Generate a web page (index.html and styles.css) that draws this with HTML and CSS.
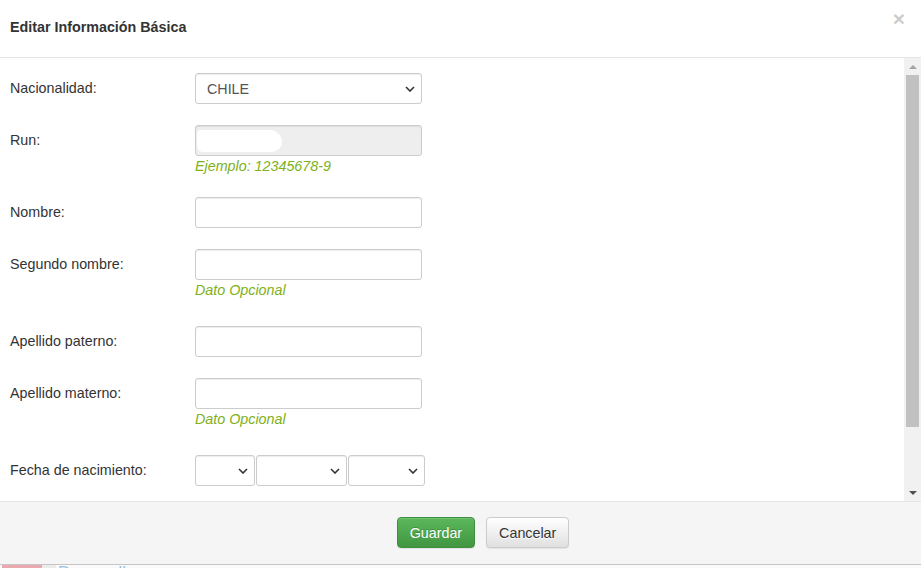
FILE: index.html
```html
<!DOCTYPE html>
<html lang="es">
<head>
    <meta charset="UTF-8">
    <meta name="viewport" content="width=device-width, initial-scale=1.0">
    <title>Editar Información Básica</title>
    <link rel="stylesheet" href="styles.css">
</head>
<body>
    <div class="modal">
        <div class="modal-header">
            <h4 class="modal-title">Editar Información Básica</h4>
            <button class="close" type="button">&times;</button>
        </div>

        <div class="modal-body">
            <div class="body-content">
                <div class="form-row">
                    <label for="nacionalidad">Nacionalidad:</label>
                    <div class="field">
                        <div class="select-wrap">
                            <select id="nacionalidad" class="form-control">
                                <option>CHILE</option>
                            </select>
                            <svg class="chevron" width="10" height="6" viewBox="0 0 10 6"><path d="M1 1l4 4 4-4" fill="none" stroke="#333" stroke-width="1.6"/></svg>
                        </div>
                    </div>
                </div>

                <div class="form-row">
                    <label for="run">Run:</label>
                    <div class="field">
                        <div class="input-wrap">
                            <input id="run" class="form-control" type="text" disabled>
                            <span class="blob"></span>
                        </div>
                        <span class="help-block help-tight">Ejemplo: 12345678-9</span>
                    </div>
                </div>

                <div class="form-row">
                    <label for="nombre">Nombre:</label>
                    <div class="field">
                        <input id="nombre" class="form-control" type="text">
                    </div>
                </div>

                <div class="form-row">
                    <label for="segundo">Segundo nombre:</label>
                    <div class="field">
                        <input id="segundo" class="form-control" type="text">
                        <span class="help-block">Dato Opcional</span>
                    </div>
                </div>

                <div class="form-row">
                    <label for="paterno">Apellido paterno:</label>
                    <div class="field">
                        <input id="paterno" class="form-control" type="text">
                    </div>
                </div>

                <div class="form-row">
                    <label for="materno">Apellido materno:</label>
                    <div class="field">
                        <input id="materno" class="form-control" type="text">
                        <span class="help-block">Dato Opcional</span>
                    </div>
                </div>

                <div class="form-row">
                    <label for="dia">Fecha de nacimiento:</label>
                    <div class="field date-fields">
                        <div class="select-wrap dia">
                            <select id="dia" class="form-control"><option></option></select>
                            <svg class="chevron" width="10" height="6" viewBox="0 0 10 6"><path d="M1 1l4 4 4-4" fill="none" stroke="#333" stroke-width="1.6"/></svg>
                        </div>
                        <div class="select-wrap mes">
                            <select class="form-control"><option></option></select>
                            <svg class="chevron" width="10" height="6" viewBox="0 0 10 6"><path d="M1 1l4 4 4-4" fill="none" stroke="#333" stroke-width="1.6"/></svg>
                        </div>
                        <div class="select-wrap anio">
                            <select class="form-control"><option></option></select>
                            <svg class="chevron" width="10" height="6" viewBox="0 0 10 6"><path d="M1 1l4 4 4-4" fill="none" stroke="#333" stroke-width="1.6"/></svg>
                        </div>
                    </div>
                </div>
            </div>

            <div class="scrollbar">
                <span class="sb-btn"><span class="arrow-up"></span></span>
                <span class="sb-track"><span class="sb-thumb"></span></span>
                <span class="sb-btn"><span class="arrow-down"></span></span>
            </div>
        </div>

        <div class="modal-footer">
            <button class="btn btn-success" type="button">Guardar</button>
            <button class="btn btn-default" type="button">Cancelar</button>
        </div>
    </div>

    <div class="page-strip">
        <span class="pink"></span>
        <span class="tab"></span>
        <span class="link">Desarrollo</span>
    </div>
</body>
</html>
```

FILE: styles.css
```css
html, body {
    margin: 0;
    height: 568px;
    overflow: hidden;
}
body {
    font-family: "Liberation Sans", Arial, sans-serif;
    font-size: 14.3px;
    color: #333;
    background-color: #fff;
}
.modal {
    background-color: #fff;
    border-bottom: 1px solid #c6c6c6;
}
.modal-header {
    display: flex;
    align-items: flex-start;
    height: 58px;
    padding: 17px 16px 0 10px;
    box-sizing: border-box;
    border-bottom: 1px solid #e5e5e5;
}
.modal-title {
    margin: 0;
    font-size: 14.3px;
    line-height: 20px;
    font-weight: bold;
    color: #333;
}
.close {
    margin: -9px 0 0 auto;
    padding: 0;
    border: 0;
    background: none;
    font-family: "Liberation Sans", Arial, sans-serif;
    font-size: 21px;
    font-weight: bold;
    line-height: 21px;
    color: #000;
    opacity: .2;
    cursor: pointer;
}

/* cuerpo con scroll */
.modal-body {
    display: flex;
    height: 443px;
}
.body-content {
    flex: 1;
    padding: 15px 0 0 10px;
    overflow: hidden;
}
.scrollbar {
    display: flex;
    flex-direction: column;
    width: 17px;
    background-color: #f1f1f1;
}
.sb-btn {
    display: flex;
    align-items: center;
    justify-content: center;
    height: 17px;
}
.arrow-up {
    border-left: 4px solid transparent;
    border-right: 4px solid transparent;
    border-bottom: 4px solid #a3a3a3;
}
.arrow-down {
    border-left: 4px solid transparent;
    border-right: 4px solid transparent;
    border-top: 4px solid #505050;
}
.sb-track {
    flex: 1;
}
.sb-thumb {
    display: block;
    height: 352px;
    margin: 0 2px;
    background-color: #c1c1c1;
}

.form-row {
    display: grid;
    grid-template-columns: 185px 227px;
    margin-bottom: 21px;
}
.form-row label {
    line-height: 31px;
    color: #333;
}
.form-control {
    display: block;
    width: 100%;
    height: 31px;
    box-sizing: border-box;
    margin: 0;
    padding: 0 11px;
    border: 1px solid #ccc;
    border-radius: 3px;
    background-color: #fff;
    box-shadow: inset 0 1px 1px rgba(0, 0, 0, .075);
    font-family: "Liberation Sans", Arial, sans-serif;
    font-size: 14.3px;
    color: #555;
}
.form-control:disabled {
    background-color: #eee;
}
select.form-control {
    appearance: none;
    -webkit-appearance: none;
}
.select-wrap,
.input-wrap {
    position: relative;
}
.chevron {
    position: absolute;
    right: 7px;
    top: 13px;
    pointer-events: none;
}
.blob {
    position: absolute;
    left: 2px;
    top: 5px;
    width: 85px;
    height: 22px;
    border-radius: 4px 12px 10px 6px;
    background-color: #fff;
}
.help-block {
    display: block;
    margin: 2px 0 6px;
    line-height: 17px;
    font-style: italic;
    color: #80b01a;
}
.help-tight {
    margin-bottom: 1px;
}
.date-fields {
    display: flex;
    gap: 1px;
}
.date-fields .select-wrap {
    flex-shrink: 0;
}
.dia { width: 60px; }
.mes { width: 91px; }
.anio { width: 77px; }

.modal-footer {
    display: flex;
    justify-content: center;
    gap: 11px;
    height: 63px;
    box-sizing: border-box;
    padding: 15px 0 0 45px;
    border-top: 1px solid #e5e5e5;
    background-color: #f5f5f5;
}
.btn {
    height: 31px;
    padding: 0 12px;
    border: 1px solid;
    border-radius: 4px;
    font-family: "Liberation Sans", Arial, sans-serif;
    font-size: 14.3px;
    cursor: pointer;
}
.btn-success {
    color: #fff;
    border-color: #3e8f3e;
    background-image: linear-gradient(#5cb85c, #419641);
    text-shadow: 0 -1px 0 rgba(0, 0, 0, .2);
    box-shadow: inset 0 1px 0 rgba(255, 255, 255, .15), 0 1px 1px rgba(0, 0, 0, .075);
}
.btn-default {
    color: #333;
    border-color: #ccc;
    background-image: linear-gradient(#fff, #e0e0e0);
    text-shadow: 0 1px 0 #fff;
    box-shadow: inset 0 1px 0 rgba(255, 255, 255, .15), 0 1px 1px rgba(0, 0, 0, .075);
}

/* lo que asoma de la pagina de atras */
.page-strip {
    display: flex;
    height: 20px;
    background-color: #fafafa;
}
.pink {
    width: 40px;
    margin-left: 2px;
    background-color: #e9a9ae;
}
.tab {
    width: 14px;
    background-color: #ececec;
}
.link {
    margin: -1px 0 0 2px;
    font-size: 17px;
    line-height: 17px;
    color: #9cc0dd;
}
```
